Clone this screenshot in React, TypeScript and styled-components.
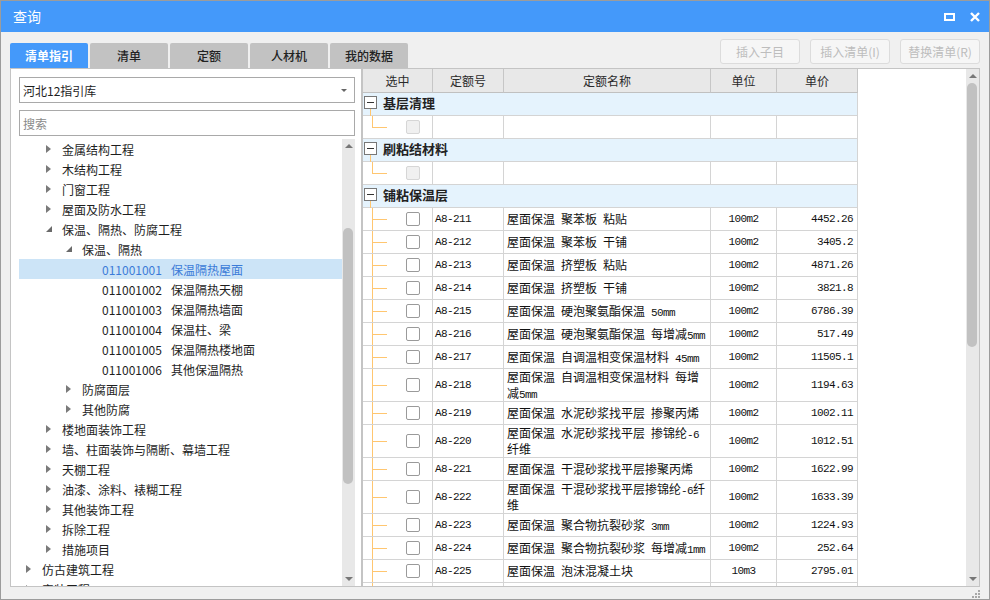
import React from 'react';
import styled, {createGlobalStyle} from 'styled-components';

const Blue = '#4499fa';
const GridLine = '#d4d4d4';
const GuideColor = '#ffc670';
const UiFont = '"Noto Sans CJK SC", "Microsoft YaHei", sans-serif';
const MonoFont = '"Liberation Mono", "Noto Sans CJK SC", monospace';

const GlobalStyle = createGlobalStyle`
    html, body {
        margin: 0;
        padding: 0;
        background: #fff;
    }
    body {
        font-family: ${UiFont};
        font-size: 12px;
        color: #1e1e1e;
    }
    * {
        box-sizing: border-box;
    }
`;

interface TreeItem {
    level: number;
    text: string;
    code?: string;
    state?: 'open' | 'closed';
    selected?: boolean;
}

interface Quota {
    code: string;
    name: string[];
    unit: string;
    price: string;
}

const Window = styled.div`
    position: relative;
    width: 990px;
    height: 600px;
    border: 1px solid #9c9c9c;
    background: #f0f0f0;
    display: flex;
    flex-direction: column;
    overflow: hidden;
`;

const TitleBar = styled.div`
    height: 31px;
    flex-shrink: 0;
    background: ${Blue};
    color: #fff;
    font-size: 14px;
    display: flex;
    align-items: center;
    padding: 0 9px 0 12px;
`;

const Title = styled.div`
    flex: 1;
    line-height: 31px;
`;

const TitleIcons = styled.div`
    display: flex;
    align-items: center;
    gap: 15px;
`;

const Body = styled.div`
    flex: 1;
    display: flex;
    flex-direction: column;
    padding: 7px 9px 12px 9px;
    min-height: 0;
`;

const TopRow = styled.div`
    height: 29px;
    display: flex;
    justify-content: space-between;
`;

const Tabs = styled.div`
    align-self: flex-end;
    display: flex;
    gap: 2px;
`;

const Tab = styled.div<{$active?: boolean}>`
    width: 78px;
    height: 25px;
    border-radius: 2px 2px 0 0;
    background: ${p => p.$active ? Blue : '#c2c2c2'};
    color: ${p => p.$active ? '#fff' : '#222'};
    font-weight: ${p => p.$active ? 700 : 500};
    display: flex;
    align-items: center;
    justify-content: center;
    font-size: 12px;
`;

const Buttons = styled.div`
    display: flex;
    gap: 10px;
    align-items: flex-start;
`;

const Btn = styled.div`
    width: 80px;
    height: 25px;
    border: 1px solid #dcdcdc;
    border-radius: 3px;
    background: #f6f6f6;
    color: #bdbdbd;
    font-size: 12px;
    display: flex;
    align-items: center;
    justify-content: center;
`;

const Panels = styled.div`
    flex: 1;
    display: flex;
    min-height: 0;
`;

const LeftPanel = styled.div`
    width: 352px;
    background: #fff;
    border: 1px solid #c4c4c4;
    display: flex;
    flex-direction: column;
    padding: 8px 6px 0 8px;
`;

const Field = styled.div`
    height: 26px;
    border: 1px solid #a9a9a9;
    display: flex;
    align-items: center;
    padding: 0 4px 0 3px;
    font-size: 12px;
    & + & {
        margin-top: 7px;
    }
`;

const FieldText = styled.span<{$placeholder?: boolean}>`
    flex: 1;
    color: ${p => p.$placeholder ? '#8a8a8a' : '#1e1e1e'};
`;

const DropArrow = styled.span`
    width: 0;
    height: 0;
    border-left: 3px solid transparent;
    border-right: 3px solid transparent;
    border-top: 3px solid #666;
    margin-right: 3px;
`;

const TreeArea = styled.div`
    flex: 1;
    margin-top: 3px;
    display: flex;
    min-height: 0;
`;

const TreeList = styled.div`
    flex: 1;
    overflow: hidden;
`;

const TreeRow = styled.div<{$level: number; $selected?: boolean}>`
    height: 20px;
    display: flex;
    align-items: center;
    padding-left: ${p => (p.$level - 1) * 20}px;
    background: ${p => p.$selected ? '#cce4f7' : 'transparent'};
    color: ${p => p.$selected ? '#3b7bd8' : '#1e1e1e'};
    font-size: 12px;
    white-space: nowrap;
`;

const Caret = styled.span`
    width: 23px;
    height: 20px;
    flex-shrink: 0;
    display: flex;
    align-items: center;
    padding-left: 7px;
`;

const ClosedArrow = styled.span`
    width: 0;
    height: 0;
    border-top: 4px solid transparent;
    border-bottom: 4px solid transparent;
    border-left: 5px solid #7a7a7a;
`;

const TreeCode = styled.span`
    margin-right: 9px;
`;

const ScrollBar = styled.div`
    width: 13px;
    flex-shrink: 0;
    background: #e8e8e8;
    display: flex;
    flex-direction: column;
`;

const ScrollArrow = styled.div<{$down?: boolean}>`
    height: 14px;
    display: flex;
    align-items: center;
    justify-content: center;
    &::before {
        content: '';
        width: 0;
        height: 0;
        border-left: 4px solid transparent;
        border-right: 4px solid transparent;
        ${p => p.$down ? 'border-top: 4px solid #777;' : 'border-bottom: 4px solid #777;'}
    }
`;

const Track = styled.div`
    flex: 1;
    min-height: 0;
`;

const Thumb = styled.div`
    width: 10px;
    margin-left: 1px;
    border-radius: 5px;
    background: #c1c1c1;
`;

const RightPanel = styled.div`
    flex: 1;
    background: #fff;
    border: 1px solid #c4c4c4;
    display: flex;
    min-width: 0;
`;

const TableArea = styled.div`
    flex: 1;
    overflow: hidden;
`;

const Table = styled.div`
    width: 495px;
`;

const Columns = '70px 71px 207px 66px 81px';

const HeaderRow = styled.div`
    display: grid;
    grid-template-columns: ${Columns};
    height: 24px;
    background: #e8e8e8;
`;

const HeadCell = styled.div`
    border-right: 1px solid #c6c6c6;
    border-bottom: 1px solid #c0c0c0;
    display: flex;
    align-items: center;
    justify-content: center;
    font-size: 12px;
    color: #2a2a2a;
`;

const GroupRow = styled.div`
    position: relative;
    height: 23px;
    padding-bottom: 3px;
    background: #e5f3fd;
    border-right: 1px solid ${GridLine};
    border-bottom: 1px solid ${GridLine};
    display: flex;
    align-items: center;
    font-size: 13px;
    font-weight: 700;
    color: #222;
    &::after {
        content: '';
        position: absolute;
        left: 7px;
        top: 16px;
        bottom: -1px;
        border-left: 1px solid ${GuideColor};
    }
`;

const MinusBox = styled.span`
    width: 13px;
    height: 13px;
    margin: 0 6px 0 1px;
    border: 1px solid #777;
    background: #fff;
    display: flex;
    align-items: center;
    justify-content: center;
    &::before {
        content: '';
        width: 7px;
        border-top: 1px solid #333;
    }
`;

const DataRow = styled.div<{$tall?: boolean}>`
    display: grid;
    grid-template-columns: ${Columns};
    height: ${p => p.$tall ? 33 : 23}px;
`;

const Cell = styled.div<{$align?: 'left' | 'center' | 'right'}>`
    position: relative;
    border-right: 1px solid ${GridLine};
    border-bottom: 1px solid ${GridLine};
    display: flex;
    align-items: center;
    justify-content: ${p => p.$align === 'center' ? 'center' : p.$align === 'right' ? 'flex-end' : 'flex-start'};
    padding: ${p => p.$align === 'right' ? '0 4px 0 0' : p.$align === 'center' ? '0' : '0 0 0 2px'};
    overflow: hidden;
`;

const Guide = styled.span<{$last?: boolean}>`
    position: relative;
    align-self: stretch;
    width: 16px;
    margin-left: 7px;
    flex-shrink: 0;
    &::before {
        content: '';
        position: absolute;
        left: 0;
        top: 0;
        bottom: ${p => p.$last ? '50%' : '-1px'};
        border-left: 1px solid ${GuideColor};
    }
    &::after {
        content: '';
        position: absolute;
        left: 0;
        top: 50%;
        width: 15px;
        border-top: 1px solid ${GuideColor};
    }
`;

const CheckBox = styled.span<{$disabled?: boolean}>`
    width: 14px;
    height: 14px;
    margin-left: 18px;
    border: 1px solid ${p => p.$disabled ? '#d6d6d6' : '#9a9a9a'};
    background: ${p => p.$disabled ? '#f0f0f0' : '#fff'};
    border-radius: 2px;
    flex-shrink: 0;
`;

const Mono = styled.span`
    font-family: ${MonoFont};
    font-size: 11px;
    line-height: 1;
    letter-spacing: -0.6px;
    color: #111;
`;

const Name = styled.div`
    font-size: 12px;
    color: #111;
    padding-left: 1px;
    margin-top: -1px;
    white-space: pre;
`;

const NameLine = styled.div`
    height: 16px;
    line-height: 16px;
`;

const Grip = styled.svg`
    position: absolute;
    right: 9px;
    bottom: 1px;
`;

const treeItems: Array<TreeItem> = [
    {level: 2, text: '金属结构工程', state: 'closed'},
    {level: 2, text: '木结构工程', state: 'closed'},
    {level: 2, text: '门窗工程', state: 'closed'},
    {level: 2, text: '屋面及防水工程', state: 'closed'},
    {level: 2, text: '保温、隔热、防腐工程', state: 'open'},
    {level: 3, text: '保温、隔热', state: 'open'},
    {level: 4, code: '011001001', text: '保温隔热屋面', selected: true},
    {level: 4, code: '011001002', text: '保温隔热天棚'},
    {level: 4, code: '011001003', text: '保温隔热墙面'},
    {level: 4, code: '011001004', text: '保温柱、梁'},
    {level: 4, code: '011001005', text: '保温隔热楼地面'},
    {level: 4, code: '011001006', text: '其他保温隔热'},
    {level: 3, text: '防腐面层', state: 'closed'},
    {level: 3, text: '其他防腐', state: 'closed'},
    {level: 2, text: '楼地面装饰工程', state: 'closed'},
    {level: 2, text: '墙、柱面装饰与隔断、幕墙工程', state: 'closed'},
    {level: 2, text: '天棚工程', state: 'closed'},
    {level: 2, text: '油漆、涂料、裱糊工程', state: 'closed'},
    {level: 2, text: '其他装饰工程', state: 'closed'},
    {level: 2, text: '拆除工程', state: 'closed'},
    {level: 2, text: '措施项目', state: 'closed'},
    {level: 1, text: '仿古建筑工程', state: 'closed'},
    {level: 1, text: '安装工程', state: 'closed'},
];

const quotas: Array<Quota> = [
    {code: 'A8-211', name: ['屋面保温 聚苯板 粘贴'], unit: '100m2', price: '4452.26'},
    {code: 'A8-212', name: ['屋面保温 聚苯板 干铺'], unit: '100m2', price: '3405.2'},
    {code: 'A8-213', name: ['屋面保温 挤塑板 粘贴'], unit: '100m2', price: '4871.26'},
    {code: 'A8-214', name: ['屋面保温 挤塑板 干铺'], unit: '100m2', price: '3821.8'},
    {code: 'A8-215', name: ['屋面保温 硬泡聚氨酯保温 50mm'], unit: '100m2', price: '6786.39'},
    {code: 'A8-216', name: ['屋面保温 硬泡聚氨酯保温 每增减5mm'], unit: '100m2', price: '517.49'},
    {code: 'A8-217', name: ['屋面保温 自调温相变保温材料 45mm'], unit: '100m2', price: '11505.1'},
    {code: 'A8-218', name: ['屋面保温 自调温相变保温材料 每增', '减5mm'], unit: '100m2', price: '1194.63'},
    {code: 'A8-219', name: ['屋面保温 水泥砂浆找平层 掺聚丙烯'], unit: '100m2', price: '1002.11'},
    {code: 'A8-220', name: ['屋面保温 水泥砂浆找平层 掺锦纶-6', '纤维'], unit: '100m2', price: '1012.51'},
    {code: 'A8-221', name: ['屋面保温 干混砂浆找平层掺聚丙烯'], unit: '100m2', price: '1622.99'},
    {code: 'A8-222', name: ['屋面保温 干混砂浆找平层掺锦纶-6纤', '维'], unit: '100m2', price: '1633.39'},
    {code: 'A8-223', name: ['屋面保温 聚合物抗裂砂浆 3mm'], unit: '100m2', price: '1224.93'},
    {code: 'A8-224', name: ['屋面保温 聚合物抗裂砂浆 每增减1mm'], unit: '100m2', price: '252.64'},
    {code: 'A8-225', name: ['屋面保温 泡沫混凝土块'], unit: '10m3', price: '2795.01'},
];

const emptyGroups = ['基层清理', '刷粘结材料'];

// ASCII runs (spaces, digits, mm) are set in the narrow mono face like the original grid font
const renderName = (line: string) =>
    line.split(/([\x20-\x7e]+)/).filter(Boolean).map((part, i) =>
        /^[\x20-\x7e]+$/.test(part) ? <Mono key={i}>{part}</Mono> : <React.Fragment key={i}>{part}</React.Fragment>
    );

const OpenArrow = () => (
    <svg width="6" height="6" viewBox="0 0 6 6"><polygon points="6,0 6,6 0,6" fill="#6a6a6a"/></svg>
);

const Scroll: React.FC<{offset: number; size: number}> = ({offset, size}) => (
    <ScrollBar>
        <ScrollArrow/>
        <Track>
            <Thumb style={{marginTop: offset, height: size}}/>
        </Track>
        <ScrollArrow $down/>
    </ScrollBar>
);

const App: React.FC = () => {
    return (
        <>
            <GlobalStyle/>
            <Window>
                <TitleBar>
                    <Title>查询</Title>
                    <TitleIcons>
                        <svg width="11" height="8" viewBox="0 0 11 8">
                            <rect x="1" y="1" width="9" height="6" fill="none" stroke="#fff" strokeWidth="2"/>
                        </svg>
                        <svg width="10" height="10" viewBox="0 0 10 10">
                            <path d="M1 1 L9 9 M9 1 L1 9" stroke="#fff" strokeWidth="2.4"/>
                        </svg>
                    </TitleIcons>
                </TitleBar>
                <Body>
                    <TopRow>
                        <Tabs>
                            <Tab $active>清单指引</Tab>
                            <Tab>清单</Tab>
                            <Tab>定额</Tab>
                            <Tab>人材机</Tab>
                            <Tab>我的数据</Tab>
                        </Tabs>
                        <Buttons>
                            <Btn>插入子目</Btn>
                            <Btn>插入清单(I)</Btn>
                            <Btn>替换清单(R)</Btn>
                        </Buttons>
                    </TopRow>
                    <Panels>
                        <LeftPanel>
                            <Field>
                                <FieldText>河北12指引库</FieldText>
                                <DropArrow/>
                            </Field>
                            <Field>
                                <FieldText $placeholder>搜索</FieldText>
                            </Field>
                            <TreeArea>
                                <TreeList>
                                    {treeItems.map((item, i) => (
                                        <TreeRow key={i} $level={item.level} $selected={item.selected}>
                                            <Caret>
                                                {item.state === 'closed' && <ClosedArrow/>}
                                                {item.state === 'open' && <OpenArrow/>}
                                            </Caret>
                                            {item.code && <TreeCode>{item.code}</TreeCode>}
                                            {item.text}
                                        </TreeRow>
                                    ))}
                                </TreeList>
                                <Scroll offset={75} size={256}/>
                            </TreeArea>
                        </LeftPanel>
                        <RightPanel>
                            <TableArea>
                                <Table>
                                    <HeaderRow>
                                        <HeadCell>选中</HeadCell>
                                        <HeadCell>定额号</HeadCell>
                                        <HeadCell>定额名称</HeadCell>
                                        <HeadCell>单位</HeadCell>
                                        <HeadCell>单价</HeadCell>
                                    </HeaderRow>
                                    {emptyGroups.map(title => (
                                        <React.Fragment key={title}>
                                            <GroupRow><MinusBox/>{title}</GroupRow>
                                            <DataRow>
                                                <Cell><Guide $last/><CheckBox $disabled/></Cell>
                                                <Cell/>
                                                <Cell/>
                                                <Cell/>
                                                <Cell/>
                                            </DataRow>
                                        </React.Fragment>
                                    ))}
                                    <GroupRow><MinusBox/>铺粘保温层</GroupRow>
                                    {quotas.map(q => (
                                        <DataRow key={q.code} $tall={q.name.length > 1}>
                                            <Cell><Guide/><CheckBox/></Cell>
                                            <Cell><Mono>{q.code}</Mono></Cell>
                                            <Cell>
                                                <Name>
                                                    {q.name.map((line, i) => (
                                                        <NameLine key={i}>{renderName(line)}</NameLine>
                                                    ))}
                                                </Name>
                                            </Cell>
                                            <Cell $align="center"><Mono>{q.unit}</Mono></Cell>
                                            <Cell $align="right"><Mono>{q.price}</Mono></Cell>
                                        </DataRow>
                                    ))}
                                    <DataRow>
                                        <Cell><Guide/></Cell>
                                        <Cell/>
                                        <Cell/>
                                        <Cell/>
                                        <Cell/>
                                    </DataRow>
                                </Table>
                            </TableArea>
                            <Scroll offset={0} size={264}/>
                        </RightPanel>
                    </Panels>
                </Body>
                <Grip width="10" height="10" viewBox="0 0 10 10">
                    <g fill="#a8a8a8">
                        <rect x="8" y="2" width="2" height="2"/>
                        <rect x="5" y="5" width="2" height="2"/>
                        <rect x="8" y="5" width="2" height="2"/>
                        <rect x="2" y="8" width="2" height="2"/>
                        <rect x="5" y="8" width="2" height="2"/>
                        <rect x="8" y="8" width="2" height="2"/>
                    </g>
                </Grip>
            </Window>
        </>
    );
}

export default App;
